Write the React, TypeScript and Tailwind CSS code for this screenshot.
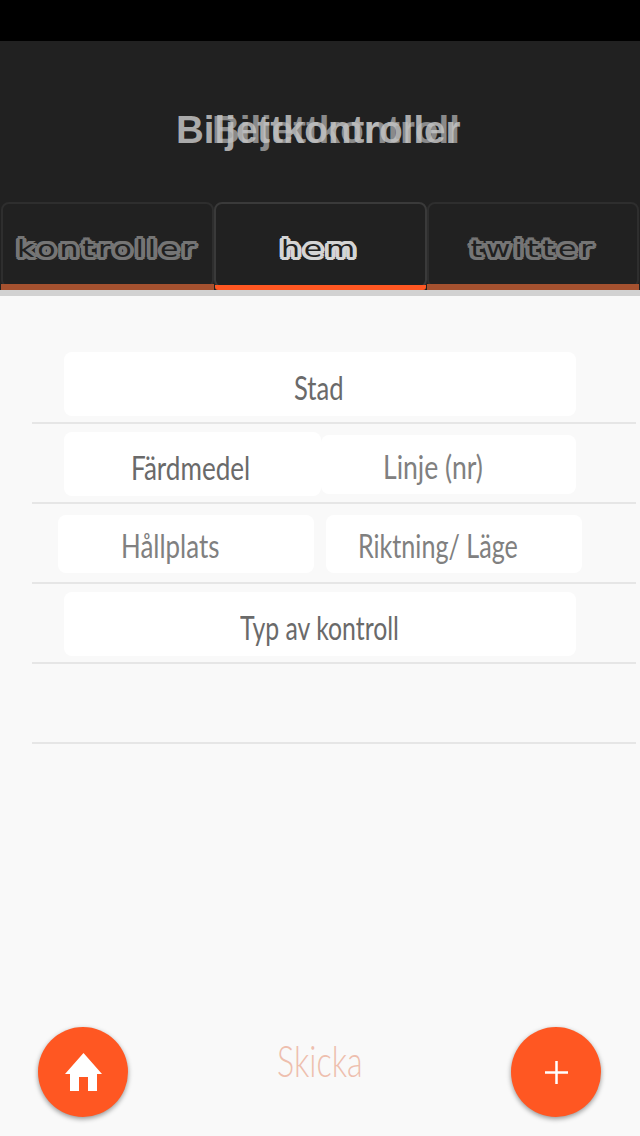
import type { ReactNode } from "react";

const ring =
  "[text-shadow:3px_0_var(--o),2.6px_1.5px_var(--o),1.5px_2.6px_var(--o),0_3px_var(--o),-1.5px_2.6px_var(--o),-2.6px_1.5px_var(--o),-3px_0_var(--o),-2.6px_-1.5px_var(--o),-1.5px_-2.6px_var(--o),0_-3px_var(--o),1.5px_-2.6px_var(--o),2.6px_-1.5px_var(--o),1.5px_0_var(--o),1px_1px_var(--o),0_1.5px_var(--o),-1px_1px_var(--o),-1.5px_0_var(--o),-1px_-1px_var(--o),0_-1.5px_var(--o),1px_-1px_var(--o)]";

function Tab({ label, active, width }: { label: string; active?: boolean; width: string }) {
  return (
    <div className={`${width} h-[88px] flex flex-col`}>
      <div className={`flex-1 flex items-center justify-center rounded-[8px] border-2 pt-2 ${active ? "border-[#3a3a3a]" : "border-[#2e2e2e]"}`}>
        <span
          className={`inline-block scale-x-[1.3] font-['DejaVu_Sans',sans-serif] text-[23px] leading-none tracking-[3px] text-[#202020] ${ring} ${active ? "[--o:#d4d4d4]" : "[--o:#757575]"}`}
        >
          {label}
        </span>
      </div>
      <div className={`-mt-1 ${active ? "h-[5px] mt-[-3px] bg-[#ff5722] rounded-b-[3px] mx-[1px]" : "h-[6px] bg-[#a5512f]"}`} />
    </div>
  );
}

function Field({ label, className, light, narrow = "scale-x-[0.8]" }: { label: string; className: string; light?: boolean; narrow?: string }) {
  return (
    <div className={`bg-white rounded-[8px] flex items-center text-[32px] pt-2 ${light ? "text-[#808080]" : "text-[#6a6a6a]"} ${className}`}>
      <span className={`inline-block origin-left whitespace-nowrap ${narrow}`}>{label}</span>
    </div>
  );
}

function Row({ children, className = "" }: { children?: ReactNode; className?: string }) {
  return <div className={`h-[80px] ml-[32px] mr-[4px] border-b-2 border-[#e6e6e6] flex items-start ${className}`}>{children}</div>;
}

export default function App() {
  return (
    <div className="relative w-[640px] h-[1136px] overflow-hidden bg-[#f9f9f9] font-['Lato',sans-serif]">
      <div className="h-[41px] bg-black" />
      <div className="bg-[#212121] px-[1px]">
        <div className="relative h-[161px]">
          <span className="absolute right-[179px] top-[67px] font-['Liberation_Sans',sans-serif] font-bold text-[38.5px] leading-[44px] text-[#8a8a8a]">Biljettkontroll</span>
          <span className="absolute left-[175px] top-[67px] font-['Liberation_Sans',sans-serif] font-bold text-[38.5px] leading-[44px] text-[#c4c4c4]/85">Biljettkontroller</span>
        </div>
        <div className="flex">
          <Tab label="kontroller" width="w-[213px]" />
          <Tab label="hem" active width="w-[213px]" />
          <Tab label="twitter" width="w-[212px]" />
        </div>
      </div>
      <div className="h-[6px] bg-[#d2d2d2]" />
      <div className="pt-[48px]">
        <Row className="pl-[32px]">
          <Field label="Stad" className="w-[512px] h-[64px] mt-[8px] pl-[230px]" />
        </Row>
        <Row className="pl-[32px]">
          <Field label="Färdmedel" narrow="scale-x-[0.815]" className="w-[257px] h-[64px] mt-[8px] pl-[67px]" />
          <Field label="Linje (nr)" narrow="scale-x-[0.83]" light className="w-[255px] h-[59px] mt-[11px] pl-[62px] !pt-1" />
        </Row>
        <Row className="pl-[26px]">
          <Field label="Hållplats" narrow="scale-x-[0.81]" light className="w-[256px] h-[58px] mt-[11px] pl-[63px] !pt-1" />
          <Field label="Riktning/ Läge" narrow="scale-x-[0.785]" light className="w-[256px] h-[58px] mt-[11px] ml-[12px] pl-[32px] !pt-1" />
        </Row>
        <Row className="pl-[32px]">
          <Field label="Typ av kontroll" narrow="scale-x-[0.775]" className="w-[512px] h-[64px] mt-[8px] pl-[176px]" />
        </Row>
        <Row />
      </div>
      <button className="absolute left-[38px] top-[1027px] w-[90px] h-[90px] rounded-full bg-[#ff5722] shadow-[0_2px_5px_rgba(0,0,0,0.4)] flex items-center justify-center">
        <svg width="37" height="38" viewBox="0 0 37 38" fill="white">
          <path d="M18.5 0 L37 21 H32 V38 H23 V24 H14 V38 H5 V21 H0 Z" />
        </svg>
      </button>
      <button className="absolute left-[511px] top-[1027px] w-[90px] h-[90px] rounded-full bg-[#ff5722] shadow-[0_2px_5px_rgba(0,0,0,0.4)] flex items-center justify-center">
        <svg width="23" height="23" viewBox="0 0 23 23" stroke="white" strokeWidth="2.5">
          <path d="M11.5 0 V23 M0 11.5 H23" />
        </svg>
      </button>
      <div className="absolute left-[277px] top-[1037px] text-[43px] leading-[48px] font-light text-[#eebfae]">
        <span className="inline-block origin-left scale-x-[0.75] whitespace-nowrap">Skicka</span>
      </div>
    </div>
  );
}
